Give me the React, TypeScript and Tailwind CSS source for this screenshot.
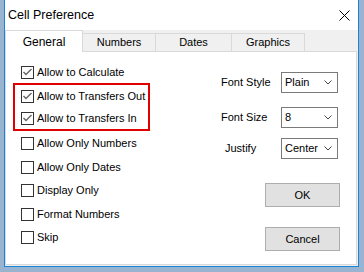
import React from "react";

const font = { fontFamily: '"Liberation Sans", Arial, sans-serif' };

function Check({ checked, label, h }: { checked?: boolean; label: string; h: string }) {
  return (
    <div className={`flex items-center ${h}`}>
      <div className="w-[13px] h-[13px] border border-[#333333] bg-white flex items-center justify-center">
        {checked && (
          <svg width="11" height="11" viewBox="0 0 11 11">
            <path d="M1.5 5 L4 7.5 L9.5 2" fill="none" stroke="#666" strokeWidth="1.4" />
          </svg>
        )}
      </div>
      <span className="ml-[3px] text-[11px] text-black leading-none">{label}</span>
    </div>
  );
}

function Select({ value }: { value: string }) {
  return (
    <div className="w-[57px] h-[21px] border border-[#7a7a7a] bg-white flex items-center justify-between pl-[3px] pr-[5px]">
      <span className="text-[11px] text-black leading-none">{value}</span>
      <svg width="8" height="5" viewBox="0 0 8 5">
        <path d="M0.5 0.5 L4 4 L7.5 0.5" fill="none" stroke="#444" strokeWidth="1" />
      </svg>
    </div>
  );
}

export default function App() {
  return (
    <div className="w-[364px] h-[272px] bg-[#99b4d1] overflow-hidden" style={font}>
      <div className="ml-[4px] w-[355px] h-[267px] border-x border-b border-[#1883d7] bg-white flex flex-col">
        <div className="h-[30px] shrink-0 bg-white flex items-center justify-between pl-[3px] pr-[8px]">
          <span className="text-[12.5px] text-black">Cell Preference</span>
          <svg width="11" height="11" viewBox="0 0 11 11">
            <path d="M0.5 0.5 L10.5 10.5 M10.5 0.5 L0.5 10.5" stroke="#000" strokeWidth="1" />
          </svg>
        </div>
        <div className="flex-1 bg-[#f0f0f0] flex flex-col pr-px pb-px">
          <div className="flex items-end h-[21px] shrink-0 relative z-10">
            <div className="w-[78px] h-[22px] bg-white border-t border-x border-[#d9d9d9] flex items-center justify-center -mb-px">
              <span className="text-[12px] text-black">General</span>
            </div>
            <div className="w-[73px] h-[18px] border-t border-r border-[#d9d9d9] flex items-center justify-center">
              <span className="text-[11px] text-black">Numbers</span>
            </div>
            <div className="w-[76px] h-[18px] border-t border-r border-[#d9d9d9] flex items-center justify-center">
              <span className="text-[11px] text-black">Dates</span>
            </div>
            <div className="w-[73px] h-[18px] border-t border-r border-[#d9d9d9] flex items-center justify-center">
              <span className="text-[11px] text-black">Graphics</span>
            </div>
          </div>
          <div className="flex-1 bg-white border border-[#d9d9d9] flex">
            <div className="pl-[15px] pt-[9px] w-[215px] shrink-0">
              <Check checked label="Allow to Calculate" h="h-[22px]" />
              <div className="-ml-[8px] w-[137px] border-2 border-[#e00000] pl-[6px]">
                <Check checked label="Allow to Transfers Out" h="h-[22px]" />
                <Check checked label="Allow to Transfers In" h="h-[22px]" />
              </div>
              <div className="mt-[1px]">
                <Check label="Allow Only Numbers" h="h-[23.5px]" />
                <Check label="Allow Only Dates" h="h-[23.5px]" />
                <Check label="Display Only" h="h-[23.5px]" />
                <Check label="Format Numbers" h="h-[23.5px]" />
                <Check label="Skip" h="h-[23.5px]" />
              </div>
            </div>
            <div className="flex flex-col pt-[20px]">
              <div className="flex items-center">
                <span className="w-[60px] text-[11px] text-black">Font Style</span>
                <Select value="Plain" />
              </div>
              <div className="flex items-center mt-[14px]">
                <span className="w-[60px] text-[11px] text-black">Font Size</span>
                <Select value="8" />
              </div>
              <div className="flex items-center mt-[10px]">
                <span className="w-[60px] pl-[4px] text-[11px] text-black">Justify</span>
                <Select value="Center" />
              </div>
              <div className="ml-[44px] mt-[24px] w-[75px] h-[24px] bg-[#e1e1e1] border border-[#adadad] flex items-center justify-center text-[11px] text-black">OK</div>
              <div className="ml-[44px] mt-[20px] w-[75px] h-[24px] bg-[#e1e1e1] border border-[#adadad] flex items-center justify-center text-[11px] text-black">Cancel</div>
            </div>
          </div>
        </div>
      </div>
    </div>
  );
}
